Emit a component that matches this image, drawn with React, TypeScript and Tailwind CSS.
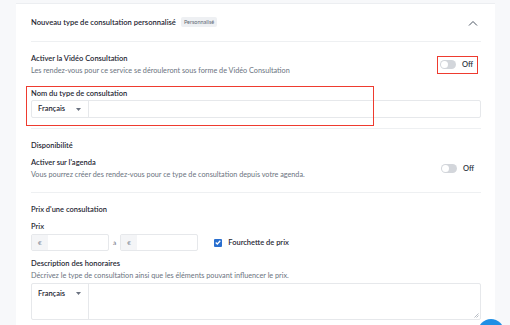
import React from 'react';

const Toggle = () => {
    return (
        <div className='flex items-center gap-[6px]'>
            <div className='relative w-[16px] h-[9px] rounded-full bg-[#d3d6db]'>
                <div className='absolute left-[1px] top-[1px] w-[7px] h-[7px] rounded-full bg-white'></div>
            </div>
            <span className='text-[7.5px] font-semibold text-[#2c3440]'>Off</span>
        </div>
    );
};

const Caret = () => (
    <svg width="5" height="3" viewBox="0 0 5 3" className='fill-[#6b7280]'>
        <path d="M0 0h5L2.5 3z" />
    </svg>
);

const LangSelect = () => (
    <div className='w-[57px] shrink-0 border-r border-[#e6e8eb] flex items-start justify-between pl-[6px] pr-[7px] pt-[5px]'>
        <span className='text-[7.5px] font-semibold text-[#1f2733] leading-[9px]'>Français</span>
        <span className='mt-[3px]'><Caret /></span>
    </div>
);

const PriceInput = () => (
    <div className='w-[78px] h-[17px] border border-[#e6e8eb] rounded-[2px] flex'>
        <div className='w-[16px] bg-[#f4f5f7] flex items-center justify-center text-[6.5px] text-[#8b93a0]'>€</div>
        <div className='flex-1'></div>
    </div>
);

function App() {
    return (
        <div className='w-full h-[325px] bg-[#f7f8fa] pl-4 pr-[15px] overflow-hidden relative' style={{ fontFamily: 'Lato, "Noto Sans", sans-serif' }}>
            <div className='bg-white border-t border-[#eceef1] mt-[3px] h-full px-[15px] pr-[14px] text-[#1f2733]'>
                {/* header */}
                <div className='h-[38px] flex items-center justify-between border-b border-[#eef0f2]'>
                    <div className='flex items-center gap-[5px]'>
                        <span className='text-[7.6px] font-semibold'>Nouveau type de consultation personnalisé</span>
                        <span className='bg-[#eef0f3] text-[#5f6773] text-[5.5px] px-[3px] h-[10px] flex items-center rounded-[2px]'>Personnalisé</span>
                    </div>
                    <svg width="10" height="6" viewBox="0 0 10 6" className='mr-[3px] fill-none stroke-[#4b5563]' strokeWidth="1">
                        <path d="M1 5.5L5 1.5L9 5.5" />
                    </svg>
                </div>

                {/* video consultation + name */}
                <div className='pt-[11px] pb-[10px] border-b border-[#eef0f2]'>
                    <div className='flex items-center justify-between'>
                        <div>
                            <div className='text-[7.5px] font-semibold leading-[11px]'>Activer la Vidéo Consultation</div>
                            <div className='text-[7.25px] text-[#6b7380] leading-[11px] mt-[1px]'>Les rendez-vous pour ce service se dérouleront sous forme de Vidéo Consultation</div>
                        </div>
                        <div className='border-[1.5px] border-[#ee3b2f] pl-[2px] pr-[4px] h-[18px] flex items-center mr-[3px]'>
                            <Toggle />
                        </div>
                    </div>
                    <div className='relative mt-[11px]'>
                        <div className='absolute left-[-5px] top-[-1.5px] w-[348px] h-[40px] border-[1.5px] border-[#ee3b2f]'></div>
                        <div className='text-[7.5px] font-semibold leading-[11px] pt-[1px]'>Nom du type de consultation</div>
                        <div className='mt-[1px] h-[18px] border border-[#e6e8eb] rounded-[2px] flex'>
                            <div className='w-[57px] border-r border-[#e6e8eb] flex items-center justify-between pl-[6px] pr-[7px]'>
                                <span className='text-[7.5px] font-semibold'>Français</span>
                                <Caret />
                            </div>
                        </div>
                    </div>
                </div>

                {/* availability */}
                <div className='pt-[11px] pb-[12px] border-b border-[#eef0f2]'>
                    <div className='text-[7.5px] font-semibold leading-[11px]'>Disponibilité</div>
                    <div className='flex items-center justify-between mt-[6px]'>
                        <div>
                            <div className='text-[7.5px] font-semibold leading-[11px]'>Activer sur l'agenda</div>
                            <div className='text-[7.25px] text-[#6b7380] leading-[11px] mt-[1px]'>Vous pourrez créer des rendez-vous pour ce type de consultation depuis votre agenda.</div>
                        </div>
                        <div className='pl-[3px] pr-[7px]'>
                            <Toggle />
                        </div>
                    </div>
                </div>

                {/* price */}
                <div className='pt-[11px]'>
                    <div className='text-[7.5px] font-semibold leading-[11px]'>Prix d'une consultation</div>
                    <div className='text-[7.5px] font-semibold leading-[11px] mt-[6px]'>Prix</div>
                    <div className='flex items-center mt-[2px]'>
                        <PriceInput />
                        <span className='text-[6.5px] text-[#6b7380] ml-[4px] mr-[4px]'>à</span>
                        <PriceInput />
                        <div className='flex items-center ml-[16px] gap-[6px]'>
                            <div className='w-[8px] h-[8px] rounded-[1px] bg-[#2a6fcf] flex items-center justify-center'>
                                <svg width="6" height="5" viewBox="0 0 6 5" className='fill-none stroke-white' strokeWidth="1.3">
                                    <path d="M0.7 2.5L2.3 4L5.3 0.8" />
                                </svg>
                            </div>
                            <span className='text-[7.5px] font-semibold'>Fourchette de prix</span>
                        </div>
                    </div>
                    <div className='text-[7.5px] font-semibold leading-[11px] mt-[7px]'>Description des honoraires</div>
                    <div className='text-[7.25px] text-[#6b7380] leading-[11px] mt-[1px]'>Décrivez le type de consultation ainsi que les éléments pouvant influencer le prix.</div>
                    <div className='relative mt-[2px] h-[37px] border border-[#e6e8eb] rounded-[2px] flex'>
                        <LangSelect />
                        <svg width="5" height="5" viewBox="0 0 5 5" className='absolute right-[1px] bottom-[1px] stroke-[#9aa1ab]' strokeWidth="0.7">
                            <path d="M4.5 0.5L0.5 4.5M4.5 2.5L2.5 4.5" />
                        </svg>
                    </div>
                </div>
            </div>
            <div className='absolute left-[478px] top-[319px] w-[26px] h-[26px] rounded-full bg-[#1f8fe5]'></div>
        </div>
    );
}

export default App;
